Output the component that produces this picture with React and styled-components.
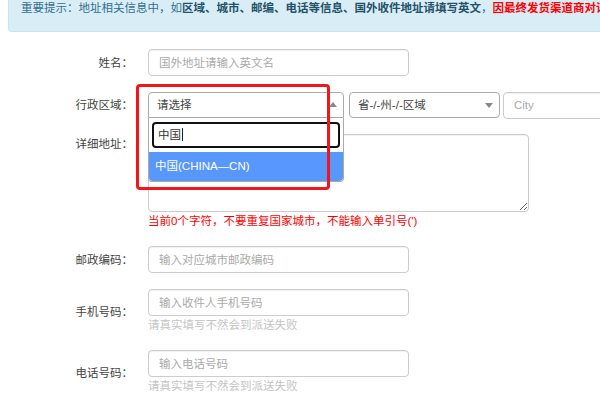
import styled, { createGlobalStyle } from "styled-components";

const GlobalStyle = createGlobalStyle`
  html, body {
    margin: 0;
    padding: 0;
    background: #fff;
  }
  body {
    font-family: "Liberation Sans", "Noto Sans CJK SC", sans-serif;
    font-size: 11.5px;
    color: #333;
  }
`;

function App() {
    return (
        <>
            <GlobalStyle />
            <Page>
                <Notice>
                    重要提示：地址相关信息中，如
                    <strong>区域、城市、邮编、电话等信息、国外收件地址请填写英文</strong>
                    ，<Warn>因最终发货渠道商对详细地址要求严格，请务必认真填写</Warn>
                </Notice>

                <Form>
                    <Row>
                        <Label>姓名：</Label>
                        <TextInput placeholder="国外地址请输入英文名" />
                    </Row>

                    <Row $height={26}>
                        <Label>行政区域：</Label>
                        <SelectWrap>
                            <SelectHead $open $width={196}>
                                请选择
                                <Arrow $up />
                            </SelectHead>
                            <Dropdown>
                                <SearchField>
                                    中国<Caret />
                                </SearchField>
                                <Option $active>中国(CHINA—CN)</Option>
                            </Dropdown>
                            <Marker />
                        </SelectWrap>
                        <SelectHead $width={151} $gap={5}>
                            省-/-州-/-区域
                            <Arrow />
                        </SelectHead>
                        <CityInput placeholder="City" />
                    </Row>

                    <Row $top>
                        <Label $top>详细地址：</Label>
                        <Field>
                            <TextArea />
                            <Help $red>当前0个字符，不要重复国家城市，不能输入单引号(')</Help>
                        </Field>
                    </Row>

                    <Row>
                        <Label>邮政编码：</Label>
                        <TextInput placeholder="输入对应城市邮政编码" />
                    </Row>

                    <Row>
                        <Label>手机号码：</Label>
                        <Field>
                            <TextInput placeholder="输入收件人手机号码" />
                            <Help>请真实填写不然会到派送失败</Help>
                        </Field>
                    </Row>

                    <Row>
                        <Label>电话号码：</Label>
                        <Field>
                            <TextInput placeholder="输入电话号码" />
                            <Help>请真实填写不然会到派送失败</Help>
                        </Field>
                    </Row>
                </Form>
            </Page>
        </>
    );
}

// styled components
const Page = styled.div`
  position: relative;
  width: 600px;
  height: 400px;
  overflow: hidden;
`;

const Notice = styled.div`
  margin-left: 8px;
  width: 640px;
  padding: 1px 12px 16px;
  line-height: 14px;
  white-space: nowrap;
  background: #d9edf7;
  border: 1px solid #bce8f1;
  border-top: none;
  border-radius: 0 0 4px 4px;
  color: #31708f;

  strong {
    color: #245269;
  }
`;

const Warn = styled.strong`
  && {
    color: #f00;
  }
`;

const Form = styled.div`
  padding-top: 17px;
`;

const Row = styled.div`
  display: flex;
  align-items: ${(p) => (p.$top ? "flex-start" : "center")};
  margin-bottom: 16px;
  height: ${(p) => (p.$height ? p.$height + "px" : "auto")};
`;

const Label = styled.div`
  flex-shrink: 0;
  width: 133px;
  margin-right: 15px;
  text-align: right;
  line-height: 20px;
  color: #444;
`;

const Field = styled.div`
  display: flex;
  flex-direction: column;
`;

const inputBase = `
  box-sizing: border-box;
  height: 27px;
  padding: 0 10px;
  border: 1px solid #ccc;
  border-radius: 4px;
  box-shadow: inset 0 1px 1px rgba(0, 0, 0, 0.06);
  font: inherit;
  color: #555;
  outline: none;
  background: #fff;

  &::placeholder {
    color: #aaa;
  }
`;

const TextInput = styled.input`
  ${inputBase}
  width: 261px;
`;

const CityInput = styled.input`
  ${inputBase}
  flex-shrink: 0;
  width: 150px;
  margin-left: 3px;
`;

const TextArea = styled.textarea`
  ${inputBase}
  width: 381px;
  height: 78px;
  padding: 6px 10px;
`;

const Help = styled.div`
  margin-top: 1px;
  line-height: 17px;
  color: ${(p) => (p.$red ? "#f00" : "#c4c4c4")};
`;

const SelectWrap = styled.div`
  position: relative;
  flex-shrink: 0;
`;

const SelectHead = styled.div`
  position: relative;
  box-sizing: border-box;
  flex-shrink: 0;
  width: ${(p) => p.$width}px;
  height: 26px;
  margin-left: ${(p) => p.$gap || 0}px;
  padding-left: 8px;
  line-height: 24px;
  border: 1px solid #aaa;
  border-radius: ${(p) => (p.$open ? "4px 4px 0 0" : "4px")};
  color: #444;
  background: #fff;
`;

const Arrow = styled.span`
  position: absolute;
  top: 50%;
  right: 6px;
  width: 0;
  height: 0;
  border-style: solid;
  border-color: transparent;
  ${(p) =>
    p.$up
      ? "border-width: 0 4px 5px; border-bottom-color: #888; margin-top: -3px;"
      : "border-width: 5px 4px 0; border-top-color: #888; margin-top: -2px;"}
`;

const Dropdown = styled.div`
  position: absolute;
  top: 26px;
  left: 0;
  z-index: 2;
  box-sizing: border-box;
  width: 196px;
  padding: 4px 3px 0;
  background: #fff;
  border: 1px solid #aaa;
  border-top: none;
  border-radius: 0 0 4px 4px;
`;

const SearchField = styled.div`
  box-sizing: border-box;
  height: 26px;
  padding-left: 4px;
  line-height: 22px;
  border: 2px solid #111;
  border-radius: 4px;
  color: #333;
`;

const Caret = styled.span`
  display: inline-block;
  width: 1px;
  height: 13px;
  margin-left: 1px;
  vertical-align: -2px;
  background: #222;
`;

const Option = styled.div`
  margin: 4px -3px 0;
  height: 29px;
  padding-left: 6px;
  line-height: 29px;
  border-radius: 0 0 4px 4px;
  background: ${(p) => (p.$active ? "#5897fb" : "#fff")};
  color: ${(p) => (p.$active ? "#fff" : "#444")};
`;

const Marker = styled.div`
  position: absolute;
  left: -12px;
  top: -8px;
  z-index: 3;
  box-sizing: border-box;
  width: 194px;
  height: 106px;
  border: 3px solid #f4151b;
  border-radius: 4px;
  pointer-events: none;
`;

export default App;
